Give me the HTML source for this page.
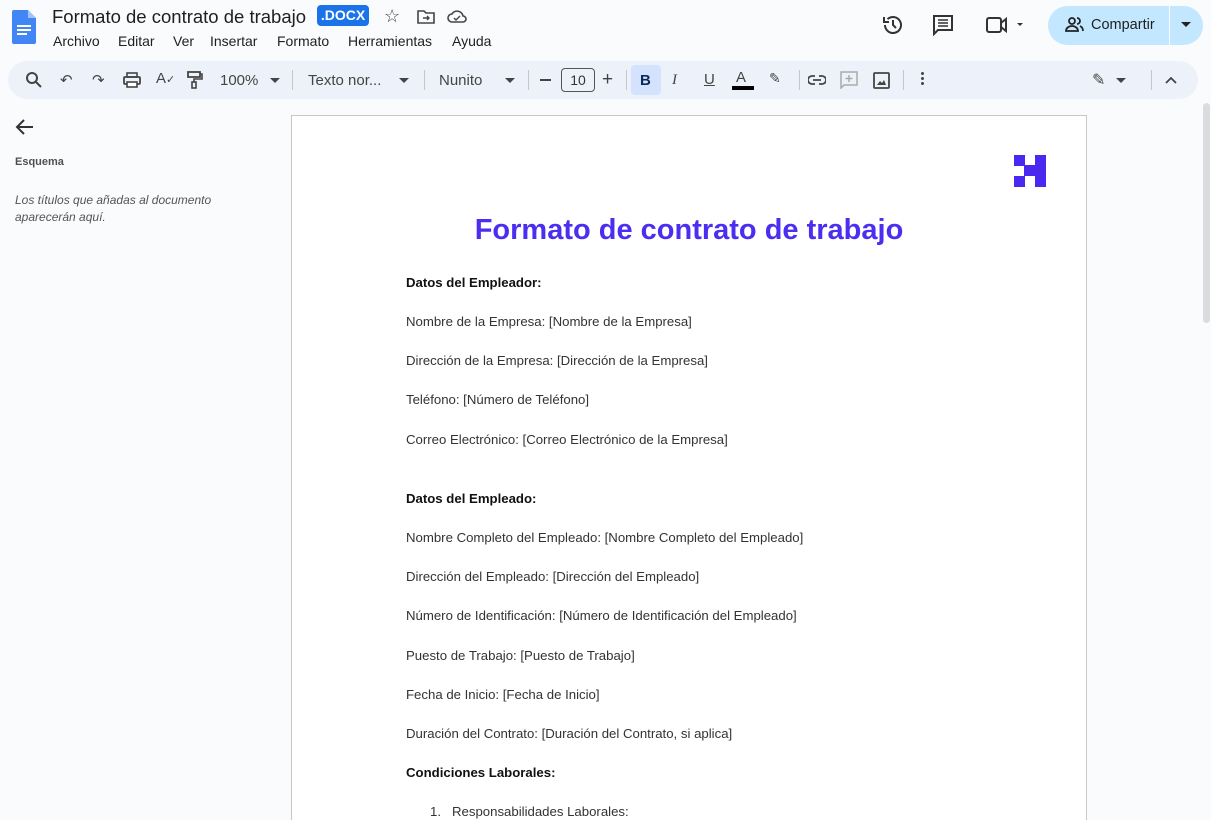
<!DOCTYPE html>
<html><head><meta charset="utf-8"><style>
*{margin:0;padding:0;box-sizing:border-box}
html,body{width:1211px;height:820px;overflow:hidden}
body{background:#f9fbfd;font-family:"Liberation Sans",sans-serif;position:relative;color:#1f1f1f}
.a{position:absolute;white-space:nowrap}
.m{position:absolute;top:33px;font-size:14px;color:#1f1f1f;white-space:nowrap}
.tb{position:absolute;left:8px;top:61px;width:1190px;height:38px;background:#edf2fa;border-radius:19px}
.sep{position:absolute;top:70px;width:1px;height:20px;background:#c7c7c7}
.page{position:absolute;left:291px;top:115px;width:796px;height:705px;background:#fff;border:1px solid #c7c7c7;border-bottom:none}
.t{position:absolute;left:406px;font-size:13.2px;line-height:15px;color:#333;white-space:nowrap}
.b{font-weight:bold;color:#111}
</style></head><body>
<svg class="a" style="left:12px;top:10px" width="24" height="34" viewBox="0 0 24 34"><path d="M2 0h14l8 8v24a2 2 0 0 1-2 2H2a2 2 0 0 1-2-2V2a2 2 0 0 1 2-2z" fill="#4285f4"/><path d="M16 0v8h8z" fill="#a1c2fa"/><rect x="5" y="15" width="14" height="2" fill="#fff"/><rect x="5" y="19" width="14" height="2" fill="#fff"/><rect x="5" y="23" width="10" height="2" fill="#fff"/></svg>
<div class="a" style="left:52px;top:6px;font-size:18.5px;color:#1f1f1f">Formato de contrato de trabajo</div>
<div class="a" style="left:317px;top:5px;width:52px;height:21px;background:#1a73e8;border-radius:4px;color:#fff;font-size:14px;font-weight:bold;text-align:center;line-height:21px">.DOCX</div>
<div class="a" style="left:384px;top:6px;font-size:18px;color:#444">☆</div>
<svg class="a" style="left:417px;top:10px" width="18" height="14" viewBox="0 0 18 14"><path d="M1 1h6l2 2h8v10H1z" fill="none" stroke="#444" stroke-width="1.6"/><path d="M6 8h6M10 6l2 2-2 2" stroke="#444" stroke-width="1.4" fill="none"/></svg>
<svg class="a" style="left:447px;top:9px" width="20" height="15" viewBox="0 0 20 15"><path d="M5 13a4 4 0 0 1 0-8 6 6 0 0 1 11 2 3 3 0 0 1 0 6z" fill="none" stroke="#444" stroke-width="1.6"/><path d="M7 9l2 2 4-4" stroke="#444" stroke-width="1.4" fill="none"/></svg>
<div class="m" style="left:53px">Archivo</div>
<div class="m" style="left:118px">Editar</div>
<div class="m" style="left:173px">Ver</div>
<div class="m" style="left:210px">Insertar</div>
<div class="m" style="left:277px">Formato</div>
<div class="m" style="left:348px">Herramientas</div>
<div class="m" style="left:452px">Ayuda</div>
<svg class="a" style="left:881px;top:13px" width="24" height="24" viewBox="0 0 24 24"><path d="M4 12a8 8 0 1 0 2.5-5.8" fill="none" stroke="#333" stroke-width="2"/><path d="M3 4v5h5" fill="none" stroke="#333" stroke-width="2"/><path d="M12 7v5l3 3" fill="none" stroke="#333" stroke-width="2"/></svg>
<svg class="a" style="left:932px;top:14px" width="22" height="22" viewBox="0 0 22 22"><path d="M2 2h18v14H6l-4 4z" fill="none" stroke="#333" stroke-width="2"/><path d="M6 6h10M6 9h10M6 12h10" stroke="#333" stroke-width="1.6"/></svg>
<svg class="a" style="left:985px;top:15px" width="40" height="20" viewBox="0 0 40 20"><rect x="2" y="3" width="14" height="14" rx="2" fill="none" stroke="#333" stroke-width="2"/><path d="M16 8l5-4v12l-5-4" fill="none" stroke="#333" stroke-width="2"/><path d="M32 8h6l-3 3z" fill="#333"/></svg>
<div class="a" style="left:1048px;top:6px;width:155px;height:39px;background:#c2e7ff;border-radius:20px"></div>
<div class="a" style="left:1169px;top:6px;width:1px;height:39px;background:#f9fbfd"></div>
<svg class="a" style="left:1065px;top:16px" width="20" height="18" viewBox="0 0 20 18"><circle cx="7" cy="5" r="3" fill="none" stroke="#222" stroke-width="1.8"/><path d="M1 15c0-3 3-5 6-5s6 2 6 5z" fill="none" stroke="#222" stroke-width="1.8"/><path d="M12 2a3 3 0 0 1 0 6M15 10c2 1 3 3 3 5" fill="none" stroke="#222" stroke-width="1.8"/></svg>
<div class="a" style="left:1091px;top:17px;font-size:14.5px;color:#1f1f1f">Compartir</div>
<svg class="a" style="left:1181px;top:22px" width="10" height="6"><path d="M0 0h10L5 5z" fill="#222"/></svg>
<div class="tb"></div>
<svg class="a" style="left:24px;top:70px" width="20" height="20" viewBox="0 0 20 20"><circle cx="8" cy="8" r="5" fill="none" stroke="#444" stroke-width="2"/><path d="M12 12l5 5" stroke="#444" stroke-width="2"/></svg>
<div class="a" style="left:60px;top:71px;font-size:15px;color:#444">↶</div>
<div class="a" style="left:92px;top:71px;font-size:15px;color:#444">↷</div>
<svg class="a" style="left:123px;top:72px" width="18" height="16" viewBox="0 0 18 16"><rect x="1" y="5" width="16" height="7" rx="1" fill="none" stroke="#444" stroke-width="1.8"/><rect x="4" y="1" width="10" height="4" fill="none" stroke="#444" stroke-width="1.6"/><rect x="4" y="10" width="10" height="5" fill="#fff" stroke="#444" stroke-width="1.6"/></svg>
<div class="a" style="left:156px;top:70px;font-size:15px;color:#444">A<span style="font-size:11px">✓</span></div>
<svg class="a" style="left:187px;top:71px" width="16" height="18" viewBox="0 0 16 18"><rect x="1" y="1" width="12" height="5" fill="none" stroke="#444" stroke-width="1.8"/><path d="M13 3h2v5H7v3" fill="none" stroke="#444" stroke-width="1.6"/><rect x="5" y="11" width="4" height="6" fill="none" stroke="#444" stroke-width="1.6"/></svg>
<div class="a" style="left:220px;top:72px;font-size:15px;color:#444">100%</div>
<svg class="a" style="left:270px;top:78px" width="10" height="5"><path d="M0 0h10L5 5z" fill="#444"/></svg>
<div class="sep" style="left:292px"></div>
<div class="a" style="left:308px;top:72px;font-size:15px;color:#444">Texto nor...</div>
<svg class="a" style="left:399px;top:78px" width="10" height="5"><path d="M0 0h10L5 5z" fill="#444"/></svg>
<div class="sep" style="left:424px"></div>
<div class="a" style="left:439px;top:72px;font-size:15px;color:#444">Nunito</div>
<svg class="a" style="left:505px;top:78px" width="10" height="5"><path d="M0 0h10L5 5z" fill="#444"/></svg>
<div class="sep" style="left:528px"></div>
<div class="a" style="left:540px;top:79px;width:11px;height:2px;background:#444"></div>
<div class="a" style="left:561px;top:68px;width:34px;height:24px;border:1px solid #555;border-radius:4px;font-size:14px;color:#333;text-align:center;line-height:22px">10</div>
<div class="a" style="left:602px;top:69px;font-size:19px;color:#444">+</div>
<div class="sep" style="left:626px"></div>
<div class="a" style="left:631px;top:65px;width:30px;height:30px;background:#d3e3fd;border-radius:4px"></div>
<div class="a" style="left:640px;top:72px;font-size:15px;font-weight:bold;color:#0b2a5a">B</div>
<div class="a" style="left:672px;top:72px;font-size:15px;font-style:italic;font-family:'Liberation Serif',serif;color:#444">I</div>
<div class="a" style="left:704px;top:71px;font-size:15px;color:#444;text-decoration:underline">U</div>
<div class="a" style="left:736px;top:69px;font-size:15px;color:#444">A</div>
<div class="a" style="left:732px;top:86px;width:22px;height:4px;background:#000"></div>
<div class="a" style="left:769px;top:70px;font-size:14px;color:#444">✎</div>
<div class="sep" style="left:799px"></div>
<svg class="a" style="left:808px;top:74px" width="18" height="12" viewBox="0 0 18 12"><path d="M7 2H4a4 4 0 0 0 0 8h3M11 2h3a4 4 0 0 1 0 8h-3M5 6h8" fill="none" stroke="#444" stroke-width="1.8"/></svg>
<svg class="a" style="left:840px;top:71px" width="18" height="18" viewBox="0 0 18 18"><path d="M1 1h16v13H4l-3 3z" fill="none" stroke="#aaa" stroke-width="1.5"/><path d="M9 4v7M5.5 7.5h7" stroke="#aaa" stroke-width="1.5"/></svg>
<svg class="a" style="left:873px;top:72px" width="17" height="17" viewBox="0 0 17 17"><rect x="1" y="1" width="15" height="15" rx="1" fill="none" stroke="#444" stroke-width="1.8"/><path d="M4 13l3-4 2 2 2-3 2 5z" fill="#444"/></svg>
<div class="sep" style="left:903px"></div>
<div class="a" style="left:921px;top:72px;width:3px;height:3px;background:#444;border-radius:2px;box-shadow:0 5px 0 #444,0 10px 0 #444"></div>
<div class="a" style="left:1092px;top:70px;font-size:16px;color:#444">✎</div>
<svg class="a" style="left:1116px;top:78px" width="10" height="5"><path d="M0 0h10L5 5z" fill="#444"/></svg>
<div class="sep" style="left:1151px"></div>
<svg class="a" style="left:1165px;top:76px" width="12" height="8"><path d="M1 7l5-5 5 5" fill="none" stroke="#444" stroke-width="1.8"/></svg>
<svg class="a" style="left:15px;top:118px" width="20" height="18" viewBox="0 0 20 18"><path d="M18 9H3M9 2L2 9l7 7" fill="none" stroke="#333" stroke-width="2"/></svg>
<div class="a" style="left:15px;top:156px;font-size:11px;color:#333;font-weight:bold;opacity:.85">Esquema</div>
<div class="a" style="left:15px;top:192px;font-size:12px;color:#555;font-style:italic;line-height:17px">Los títulos que añadas al documento<br>aparecerán aquí.</div>
<div class="a" style="left:1203px;top:103px;width:7px;height:220px;background:#dadce0;border-radius:4px"></div>
<div class="page"></div>
<svg class="a" style="left:1014px;top:155px" width="32" height="32"><g fill="#4b28f0"><rect x="0" y="0" width="11" height="11"/><rect x="21" y="0" width="11" height="32"/><rect x="10" y="10" width="12" height="11"/><rect x="0" y="21" width="11" height="11"/></g></svg>
<div class="a" style="left:291px;width:796px;top:214px;text-align:center;font-size:29px;font-weight:bold;color:#4b2ef0">Formato de contrato de trabajo</div>
<div class="t b" style="top:275px">Datos del Empleador:</div>
<div class="t" style="top:314px">Nombre de la Empresa: [Nombre de la Empresa]</div>
<div class="t" style="top:353px">Dirección de la Empresa: [Dirección de la Empresa]</div>
<div class="t" style="top:392px">Teléfono: [Número de Teléfono]</div>
<div class="t" style="top:432px">Correo Electrónico: [Correo Electrónico de la Empresa]</div>
<div class="t b" style="top:491px">Datos del Empleado:</div>
<div class="t" style="top:530px">Nombre Completo del Empleado: [Nombre Completo del Empleado]</div>
<div class="t" style="top:569px">Dirección del Empleado: [Dirección del Empleado]</div>
<div class="t" style="top:608px">Número de Identificación: [Número de Identificación del Empleado]</div>
<div class="t" style="top:648px">Puesto de Trabajo: [Puesto de Trabajo]</div>
<div class="t" style="top:687px">Fecha de Inicio: [Fecha de Inicio]</div>
<div class="t" style="top:726px">Duración del Contrato: [Duración del Contrato, si aplica]</div>
<div class="t b" style="top:765px">Condiciones Laborales:</div>
<div class="t" style="top:804px;left:430px">1.&nbsp;&nbsp;&nbsp;Responsabilidades Laborales:</div>
</body></html>
